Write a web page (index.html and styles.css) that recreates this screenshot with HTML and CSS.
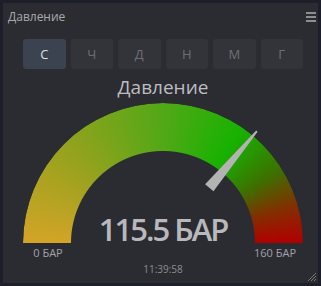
FILE: index.html
```html
<!DOCTYPE html>
<html>
<head>
<meta charset="utf-8">
<title>Давление</title>
<link rel="stylesheet" href="styles.css">
</head>
<body>
<div class="panel">
  <div class="panel-head">
    <span class="panel-title">Давление</span>
    <span class="menu"><i></i><i></i><i></i></span>
  </div>
  <div class="panel-body">
    <div class="periods">
      <button class="active">С</button>
      <button>Ч</button>
      <button>Д</button>
      <button>Н</button>
      <button>М</button>
      <button>Г</button>
    </div>
    <div class="gauge-title">Давление</div>
    <div class="gauge">
      <div class="arc"></div>
      <svg class="needle" width="280" height="140" viewBox="0 0 280 140">
        <polygon points="182.1,81.3 190.5,88.3 234.6,28.8 233.2,27.6" fill="#b3b3b3"/>
      </svg>
      <div class="value">115.5 БАР</div>
    </div>
    <div class="limits">
      <span>0 БАР</span>
      <span>160 БАР</span>
    </div>
    <div class="time">11:39:58</div>
  </div>
  <svg class="resize" width="10" height="10" viewBox="0 0 10 10">
    <path d="M1 9 L9 1 M4 9 L9 4 M7 9 L9 7" stroke="#777" stroke-width="1"/>
  </svg>
</div>
</body>
</html>
```

FILE: styles.css
```css
html, body {
   margin: 0;
   padding: 0;
   background: #1c1e29;
   font-family: "Open Sans", "DejaVu Sans", sans-serif;
}
.panel {
   position: relative;
   margin: 3px;
   width: 315px;
   height: 280px;
   background: #2b2c32;
   box-sizing: border-box;
}
.panel-head {
   display: flex;
   justify-content: space-between;
   align-items: center;
   height: 27px;
   padding: 0 2px 0 5px;
}
.panel-title {
   font-size: 12px;
   color: #a9a9ad;
}
.menu {
   display: flex;
   flex-direction: column;
   gap: 2px;
   width: 10px;
}
.menu i {
   display: block;
   height: 2px;
   background: #8e8e92;
}
.panel-body {
   padding: 9px 15px 0 20px;
}
.periods {
   display: grid;
   grid-template-columns: repeat(6, 1fr);
   gap: 5px;
}
.periods button {
   height: 30px;
   border: none;
   border-radius: 3px;
   background: #33343a;
   color: #6e6f75;
   font-family: inherit;
   font-size: 13px;
   padding: 0;
}
.periods button.active {
   background: #3b4250;
   color: #dde0e6;
}
.gauge-title {
   margin-top: 6px;
   height: 24px;
   line-height: 24px;
   text-align: center;
   font-size: 19px;
   color: #bdbdc0;
}
.gauge {
   position: relative;
   margin-top: 4px;
   width: 280px;
   height: 140px;
}
.arc {
   width: 280px;
   height: 140px;
   border-radius: 140px 140px 0 0;
   background: conic-gradient(from 270deg at 50% 100%,
      #d3a427 0deg, #94a21d 45deg, #52a817 90deg, #17b200 125deg,
      #3d7000 148deg, #862c00 165deg, #b00000 180deg, #b00000 360deg);
   -webkit-mask: radial-gradient(circle at 50% 100%, transparent 91.5px, #000 92.5px);
   mask: radial-gradient(circle at 50% 100%, transparent 91.5px, #000 92.5px);
}
.needle {
   position: absolute;
   left: 0;
   top: 0;
   overflow: visible;
}
.value {
   position: absolute;
   left: 0;
   right: 0;
   bottom: -7px;
   text-align: center;
   font-size: 31px;
   font-weight: 600;
   letter-spacing: -2px;
   color: #b9b9bc;
}
.limits {
   display: flex;
   justify-content: space-between;
   width: 280px;
   margin-top: 3px;
   font-size: 11px;
   line-height: 14px;
   color: #a2a3a8;
}
.limits span {
   width: 56px;
   text-align: center;
}
.limits span:first-child {
   margin-left: -3px;
}
.time {
   width: 280px;
   text-align: center;
   font-size: 10px;
   line-height: 14px;
   margin-top: 2px;
   color: #8b8c91;
}
.resize {
   position: absolute;
   right: 1px;
   bottom: 1px;
}
```
